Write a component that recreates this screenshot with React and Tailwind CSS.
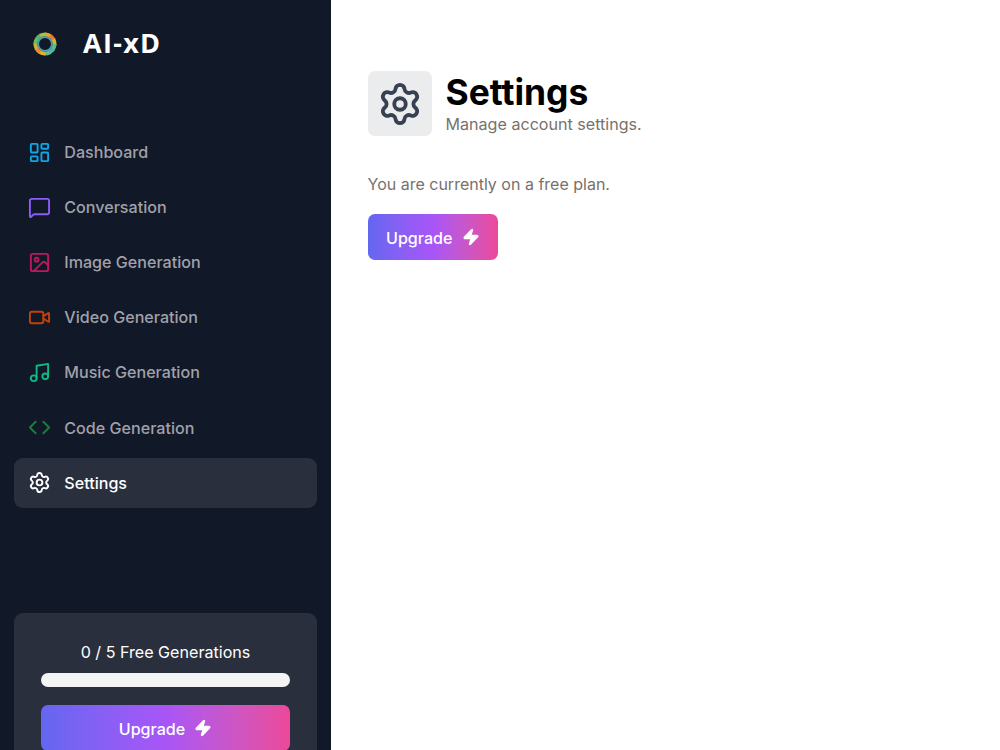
import React from "react";
import { LayoutDashboard, MessageSquare, Image, Video, Music, Code, Settings, Zap } from "lucide-react";

const routes = [
  { label: "Dashboard", icon: LayoutDashboard, color: "text-[#0ea5e9]" },
  { label: "Conversation", icon: MessageSquare, color: "text-[#8b5cf6]" },
  { label: "Image Generation", icon: Image, color: "text-[#be185d]" },
  { label: "Video Generation", icon: Video, color: "text-[#c2410c]" },
  { label: "Music Generation", icon: Music, color: "text-[#10b981]" },
  { label: "Code Generation", icon: Code, color: "text-[#15803d]" },
  { label: "Settings", icon: Settings, color: "text-white", active: true },
];

const ringColors = ["#e0a92f", "#e8792f", "#d9b23a", "#5fbf7a", "#4fb3b0", "#67c27a", "#e3b12f", "#ee8a2c", "#c9b53d", "#6fbf4f", "#58b368", "#a8c23f"];

function Logo() {
  const r = 9.6;
  const n = ringColors.length;
  return (
    <svg width="26" height="26" viewBox="0 0 26 26" className="shrink-0">
      {ringColors.map((c, i) => {
        const a0 = (i / n) * 2 * Math.PI - Math.PI / 2;
        const a1 = ((i + 1.15) / n) * 2 * Math.PI - Math.PI / 2;
        const d = `M${13 + r * Math.cos(a0)} ${13 + r * Math.sin(a0)}A${r} ${r} 0 0 1 ${13 + r * Math.cos(a1)} ${13 + r * Math.sin(a1)}`;
        return <path key={i} d={d} fill="none" stroke={c} strokeWidth="4" />;
      })}
      <circle cx="13" cy="13" r="6.9" fill="none" stroke="#4a9fb5" strokeWidth="1.8" />
    </svg>
  );
}

function UpgradeButton({ className }) {
  return (
    <button
      type="button"
      className={`flex items-center justify-center gap-[9px] rounded-[7px] bg-gradient-to-r from-[#6366f1] via-[#a855f7] to-[#ec4899] text-[16.1px] leading-[24px] font-medium text-white ${className}`}
    >
      <span className="translate-y-px">Upgrade</span>
      <Zap className="h-[18px] w-[18px] fill-white" />
    </button>
  );
}

export default function App() {
  return (
    <div className="flex h-[750px] overflow-hidden bg-white font-['Inter',sans-serif]">
      <aside className="flex w-[331px] shrink-0 flex-col bg-[#111827] px-[14px] text-white">
        <div className="flex items-center pl-[18px] pt-[30px]">
          <Logo />
          <span className="ml-[25px] -translate-y-px font-['Open_Sans',sans-serif] text-[27px] leading-[28px] font-bold tracking-[1.3px]">AI-xD</span>
        </div>

        <nav className="mt-[69px] flex flex-col gap-[5.15px]">
          {routes.map((r) => (
            <div
              key={r.label}
              className={`flex h-[50px] items-center gap-[13.5px] rounded-[9px] pl-[13.8px] text-[16.1px] font-medium ${r.active ? "bg-white/10 text-white" : "text-[#a1a1aa]"}`}
            >
              <r.icon className={`h-[23px] w-[23px] shrink-0 ${r.color}`} />
              {r.label}
            </div>
          ))}
        </nav>

        <div className="mt-[105.1px] shrink-0 rounded-[9px] bg-white/10 px-[27px] pt-[27px] pb-[27px]">
          <p className="text-center text-[16.1px] leading-[24px]">0 / 5 Free Generations</p>
          <div className="mt-[9px] h-[14px] rounded-full bg-[#f4f4f5]" />
          <UpgradeButton className="mt-[18px] h-[46px] w-full" />
        </div>
      </aside>

      <main className="flex-1 pl-[36.5px] pt-[71px]">
        <div className="flex items-center gap-[13.5px]">
          <div className="flex h-[65px] w-[64.5px] items-center justify-center rounded-[7px] bg-[#374151]/10">
            <Settings className="h-[46px] w-[46px] text-[#374151]" />
          </div>
          <div>
            <h2 className="text-[35.4px] leading-[39px] font-bold text-black">Settings</h2>
            <p className="translate-y-px text-[16.1px] leading-[23px] text-[#78716c]">Manage account settings.</p>
          </div>
        </div>
        <p className="mt-[37px] text-base leading-[23px] text-[#78716c]">You are currently on a free plan.</p>
        <UpgradeButton className="mt-[18px] h-[46px] w-[130.5px]" />
      </main>
    </div>
  );
}
